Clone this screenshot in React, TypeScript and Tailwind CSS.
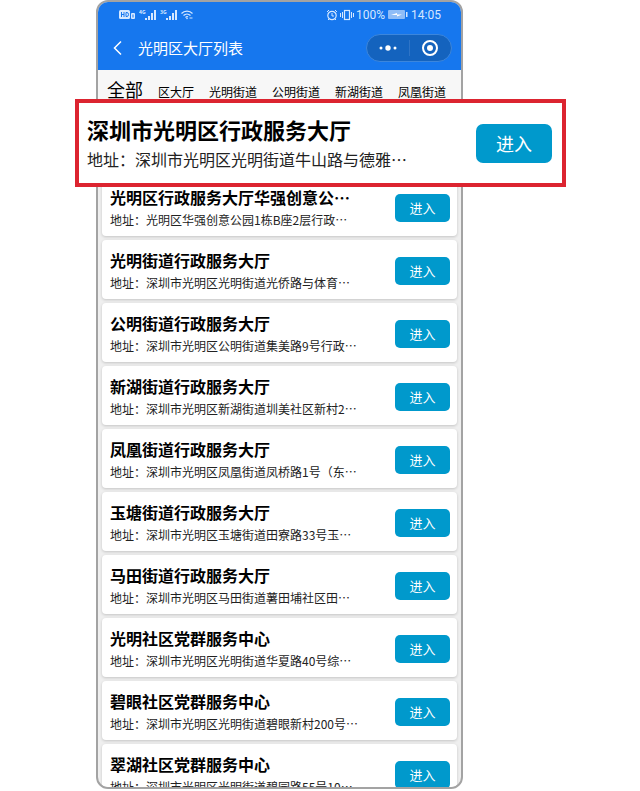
interface Hall {
    name: string;
    address: string;
}

const tabs = ['全部', '区大厅', '光明街道', '公明街道', '新湖街道', '凤凰街道'];

const featured: Hall = {
    name: '深圳市光明区行政服务大厅',
    address: '深圳市光明区光明街道牛山路与德雅…',
};

const halls: Hall[] = [
    { name: '光明区行政服务大厅华强创意公…', address: '光明区华强创意公园1栋B座2层行政…' },
    { name: '光明街道行政服务大厅', address: '深圳市光明区光明街道光侨路与体育…' },
    { name: '公明街道行政服务大厅', address: '深圳市光明区公明街道集美路9号行政…' },
    { name: '新湖街道行政服务大厅', address: '深圳市光明区新湖街道圳美社区新村2…' },
    { name: '凤凰街道行政服务大厅', address: '深圳市光明区凤凰街道凤桥路1号（东…' },
    { name: '玉塘街道行政服务大厅', address: '深圳市光明区玉塘街道田寮路33号玉…' },
    { name: '马田街道行政服务大厅', address: '深圳市光明区马田街道薯田埔社区田…' },
    { name: '光明社区党群服务中心', address: '深圳市光明区光明街道华夏路40号综…' },
    { name: '碧眼社区党群服务中心', address: '深圳市光明区光明街道碧眼新村200号…' },
    { name: '翠湖社区党群服务中心', address: '深圳市光明区光明街道碧园路55号10…' },
];

function SignalIcon({ label }: { label: string }) {
    return (
        <svg width="18" height="12" viewBox="0 0 18 12" fill="currentColor" aria-hidden="true">
            <text x="0" y="5" fontSize="5" fontWeight="700">{label}</text>
            <rect x="6" y="9" width="2" height="2" />
            <rect x="9" y="7" width="2" height="4" />
            <rect x="12" y="4" width="2" height="7" />
            <rect x="15" y="1" width="2" height="10" />
        </svg>
    );
}

function StatusBar() {
    return (
        <div className="flex h-6 items-center justify-between pt-px pr-5 pl-[21px] text-[#d6e8ff]">
            <div className="flex items-center gap-[3px]">
                <svg width="17" height="10" viewBox="0 0 17 10" aria-hidden="true">
                    <rect x="0" y="0" width="11" height="9" rx="1.5" fill="currentColor" />
                    <path d="M2.5 2v5M5 2v5M2.5 4.5H5M7 2.5v4h1c2 0 2-4 0-4z" fill="none" stroke="#1677ee" />
                    <rect x="12" y="3" width="4" height="6" rx="1" fill="currentColor" />
                    <path d="M14 4.5v3" stroke="#1677ee" />
                </svg>
                <SignalIcon label="4G" />
                <SignalIcon label="3G" />
                <svg width="12" height="10" viewBox="0 0 12 10" fill="none" stroke="currentColor" aria-hidden="true">
                    <path d="M.5 3.5C3.5.3 8.5.3 11.5 3.5M2.5 5.5C4.5 3.5 7.5 3.5 9.5 5.5M4.5 7.5Q6 6 7 7" strokeWidth="1.2" />
                    <circle cx="6" cy="8.5" r=".8" fill="currentColor" stroke="none" />
                    <path d="M8.5 8h3" />
                </svg>
            </div>
            <div className="flex items-center font-['Roboto',sans-serif] text-xs">
                <svg width="12" height="12" viewBox="0 0 12 12" fill="none" stroke="currentColor" aria-hidden="true">
                    <circle cx="6" cy="6.5" r="4.2" strokeWidth="1.2" />
                    <path d="M6 4v3h2M1 3l2-2M11 3L9 1M3 10l-1 1M9 10l1 1" />
                </svg>
                <svg className="ml-[2px]" width="14" height="12" viewBox="0 0 14 12" fill="none" stroke="currentColor" aria-hidden="true">
                    <rect x="4.5" y="1.5" width="5" height="9" strokeWidth="1.2" />
                    <path d="M2.5 3v6M11.5 3v6M.5 4v4M13.5 4v4" />
                </svg>
                <span className="ml-[2px]">100%</span>
                <svg className="mx-[3px]" width="20" height="9" viewBox="0 0 20 9" aria-hidden="true">
                    <rect x="0" y="0" width="17" height="9" rx="1" fill="#8fbdf7" />
                    <path d="M3 5l6-2v1.5h5L9 6.5V5z" fill="#fff" />
                    <rect x="18" y="2" width="1.5" height="5" fill="currentColor" />
                </svg>
                <span>14:05</span>
            </div>
        </div>
    );
}

function TitleBar() {
    return (
        <div className="flex h-11 items-center pr-[9px] pl-[14px] text-white">
            <button type="button" aria-label="返回">
                <svg width="12" height="16" viewBox="0 0 12 16" fill="none" stroke="currentColor" strokeWidth="1.5">
                    <path d="M9 1.5L2.5 8 9 14.5" />
                </svg>
            </button>
            <h1 className="ml-[14px] flex-1 text-[15px]">光明区大厅列表</h1>
            <div className="flex h-7 w-[86px] items-center rounded-full border border-[#3c86dc] bg-[#1463be]">
                <button type="button" aria-label="更多" className="flex flex-1 justify-center">
                    <svg width="18" height="8" viewBox="0 0 18 8" fill="currentColor">
                        <circle cx="2" cy="4" r="1.5" />
                        <circle cx="9" cy="4" r="2.7" />
                        <circle cx="16" cy="4" r="1.5" />
                    </svg>
                </button>
                <span className="h-4 w-px bg-[#2f74c6]" />
                <button type="button" aria-label="关闭" className="flex flex-1 justify-center">
                    <svg width="18" height="18" viewBox="0 0 18 18" fill="none" stroke="currentColor">
                        <circle cx="9" cy="9" r="7" strokeWidth="2" />
                        <circle cx="9" cy="9" r="3" fill="currentColor" stroke="none" />
                    </svg>
                </button>
            </div>
        </div>
    );
}

function HallCard({ hall }: { hall: Hall }) {
    return (
        <li className="flex items-center justify-between rounded bg-white pt-2 pr-[7px] pb-[5px] pl-2 shadow-[0_1px_3px_rgba(0,0,0,0.18)]">
            <div className="min-w-0 whitespace-nowrap">
                <h2 className="text-base leading-6 font-bold">{hall.name}</h2>
                <p className="text-xs leading-[22px] text-[#222]">地址：{hall.address}</p>
            </div>
            <button type="button" className="h-7 w-[55px] shrink-0 rounded-[5px] bg-[#0099cc] text-[13px] text-white">
                进入
            </button>
        </li>
    );
}

// Enlarged first card that sits over the list
function Callout({ hall }: { hall: Hall }) {
    return (
        <div className="absolute top-[99px] -right-[103px] -left-[21px] flex items-center justify-between border-4 border-[#dc2430] bg-white py-[10px] pr-[10px] pl-2">
            <div className="whitespace-nowrap">
                <h2 className="text-[22px] leading-8 font-bold">{hall.name}</h2>
                <p className="text-base leading-7 text-[#222]">地址：{hall.address}</p>
            </div>
            <button type="button" className="h-[39px] w-[76px] shrink-0 rounded-[7px] bg-[#0099cc] text-lg text-white">
                进入
            </button>
        </div>
    );
}

export default function App() {
    return (
        <div lang="zh-CN" className="min-h-screen bg-white pr-[177px] pl-24 font-['Noto_Sans_CJK_SC',sans-serif] text-black">
            <div className="relative">
                <div className="flex h-[calc(100vh-2px)] flex-col overflow-hidden rounded-xl border-2 border-[#a3a3a3] bg-[#efefef]">
                    <header className="shrink-0 bg-[#1677ee]">
                        <StatusBar />
                        <TitleBar />
                    </header>
                    <nav className="flex h-11 shrink-0 items-baseline gap-[15px] bg-[#f7f7f7] pt-[5px] pl-[9px] whitespace-nowrap">
                        {tabs.map((tab, i) => (
                            <button key={tab} type="button" className={i === 0 ? 'text-lg' : 'text-xs'}>
                                {tab}
                            </button>
                        ))}
                    </nav>
                    {/* Top padding leaves room for the enlarged card */}
                    <ul className="flex flex-col gap-1 px-1 pt-[63px]">
                        {halls.map((hall) => (
                            <HallCard key={hall.name} hall={hall} />
                        ))}
                    </ul>
                </div>
                <Callout hall={featured} />
            </div>
        </div>
    );
}
